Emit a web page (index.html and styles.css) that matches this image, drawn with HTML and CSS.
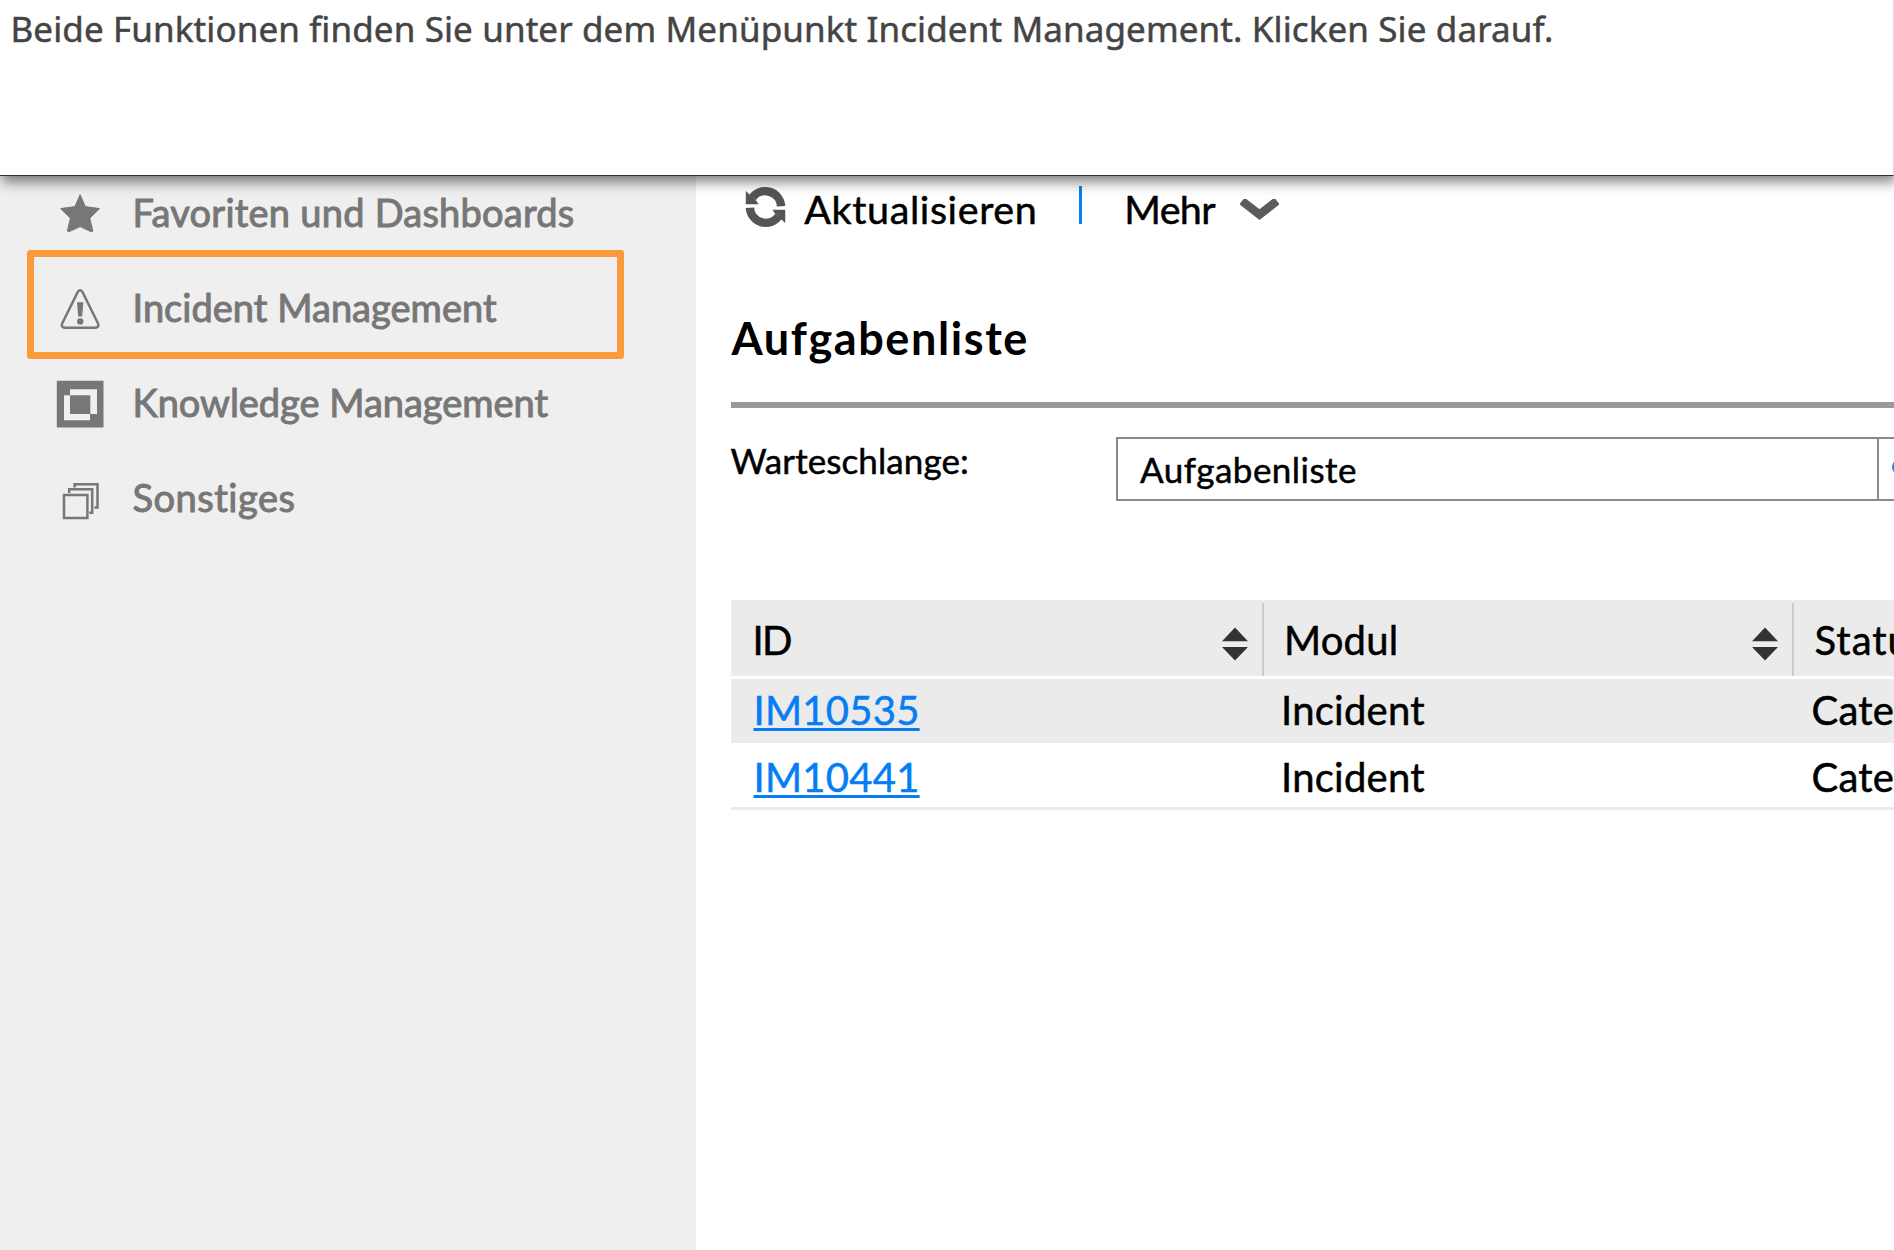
FILE: index.html
```html
<!DOCTYPE html>
<html lang="de">
<head>
<meta charset="utf-8">
<title>Incident Management</title>
<link rel="stylesheet" href="styles.css">
</head>
<body>
<header class="hint">Beide Funktionen finden Sie unter dem Menüpunkt Incident Management. Klicken Sie darauf.</header>
<div class="app">
  <nav class="sidebar">
    <ul class="menu">
      <li class="item">
        <svg class="icon" viewBox="0 0 48 48"><path d="M24.1 4.7 29.3 16.6 43.5 18.6 33.8 28.2 36.8 40.8Q36.5 42.4 34.8 41.6L24.1 36.6 13.4 41.6Q11.7 42.4 11.4 40.8L14.4 28.2 4.7 18.6 18.9 16.6z" fill="#777" stroke="#777"/></svg>
        <span class="t-fav">Favoriten und Dashboards</span>
      </li>
      <li class="item marked">
        <svg class="icon" viewBox="0 0 48 48"><path d="M21.9 6.7Q24.1 3.6 26.3 6.7L42.2 38.8Q43 42.7 39.4 42.7H8.8Q5.2 42.7 6 38.8z" fill="none" stroke="#777" stroke-width="2.5"/><path d="M21 17.3H27.4L26.2 31.4H22.2z" fill="#777"/><circle cx="24.2" cy="36.4" r="3.2" fill="#777"/></svg>
        <span class="t-inc">Incident Management</span>
      </li>
      <li class="item">
        <svg class="icon" viewBox="0 0 48 48"><path d="M.8.8H47.5V47.6H.8z" fill="#777"/><path d="M14 9.3H41V34H34.3V15.3H14zM8 15.3H14V34H34V40.3H8z" fill="#efefef"/></svg>
        <span class="t-know">Knowledge Management</span>
      </li>
      <li class="item">
        <svg class="icon" viewBox="0 0 48 48"><g fill="none" stroke="#777" stroke-width="2.5"><path d="M8 18.9H31.4V41.9H8z"/><path d="M13.2 17V13.2H36.2V36.8H33.2"/><path d="M18.6 11.5V8.2H41.5V31.6H38.4"/></g></svg>
        <span class="t-sonst">Sonstiges</span>
      </li>
    </ul>
  </nav>
  <main class="content">
    <div class="toolbar">
      <svg class="refresh" viewBox="0 0 42 42"><g fill="none" stroke="#555" stroke-width="8.6"><path d="M37 20.2A16.3 16.3 0 0 0 7.6 11.5"/><path d="M5 21.8A16.3 16.3 0 0 0 34.4 30.5"/></g><path d="M.8 4.5V18.2H13.8L12 15z M41.2 37.5V23.8H28.2L30 27z" fill="#555"/></svg>
      <span class="t-akt">Aktualisieren</span>
      <span class="divider"></span>
      <span class="t-mehr">Mehr</span>
      <svg class="chevron" viewBox="0 0 39 22"><path d="M2 2 19.5 15.6 37 2" fill="none" stroke="#5c5c5c" stroke-width="8.5"/></svg>
    </div>
    <h1 class="title">Aufgabenliste</h1>
    <div class="field">
      <label class="label">Warteschlange:</label>
      <div class="combo"><span class="value">Aufgabenliste</span><span class="lookup"><svg class="dot" viewBox="0 0 16 16"><circle cx="8" cy="8" r="6" fill="none" stroke="#2b84e0" stroke-width="4"/></svg></span></div>
    </div>
    <div class="table">
      <div class="row head">
        <div class="cell"><span class="t-id">ID</span><svg class="sort" viewBox="0 0 28 34"><path d="M14 .5 27 14.3H1zM14 33.5 27 20H1z" fill="#333"/></svg></div>
        <div class="cell"><span class="t-modul">Modul</span><svg class="sort" viewBox="0 0 28 34"><path d="M14 .5 27 14.3H1zM14 33.5 27 20H1z" fill="#333"/></svg></div>
        <div class="cell"><span class="t-status">Status</span></div>
      </div>
      <div class="row odd">
        <div class="cell"><a class="link" href="#">IM10535</a></div>
        <div class="cell">Incident</div>
        <div class="cell">Categorize</div>
      </div>
      <div class="row even">
        <div class="cell"><a class="link" href="#">IM10441</a></div>
        <div class="cell">Incident</div>
        <div class="cell">Categorize</div>
      </div>
    </div>
  </main>
</div>
</body>
</html>
```
FILE: styles.css
```css
* { box-sizing: border-box; }
body {
  margin: 0;
  height: 1250px;
  overflow: hidden;
  display: flex;
  flex-direction: column;
  background: #fff;
  color: #000;
  font-family: Lato, "Liberation Sans", sans-serif;
  -webkit-text-stroke: 0.5px currentColor;
  white-space: nowrap;
}
.hint {
  position: relative;
  z-index: 2;
  flex: none;
  height: 176px;
  padding: 5px 0 0 10.5px;
  background: #fff;
  border-right: 1px solid #ddd;
  border-bottom: 1px solid #2d2d2d;
  box-shadow: 2px 6px 12px rgba(0, 0, 0, 0.5);
  color: #444;
  font: 35px/48px "Noto Sans", sans-serif;
  letter-spacing: 0.105px;
}
.app { flex: 1; display: flex; min-height: 0; }

.sidebar { flex: none; width: 695.5px; background: #efefef; color: #777; }
.menu { list-style: none; margin: -11.6px 0 0; padding: 0; }
.item {
  position: relative;
  display: flex;
  align-items: center;
  gap: 28.5px;
  height: 95.2px;
  padding-left: 56px;
  font-size: 38px;
  line-height: 96.6px;
  -webkit-text-stroke-width: 1px;
}
.icon { flex: none; width: 48px; height: 48px; margin-top: 4px; }
.marked::after {
  content: "";
  box-sizing: border-box;
  position: absolute;
  left: 26.5px;
  top: -9.6px;
  width: 597.5px;
  height: 109px;
  border: 7.4px solid #f99b3a;
  border-radius: 3px;
}
.t-fav { letter-spacing: 0.24px; }
.t-inc { letter-spacing: 0.03px; }
.t-know { letter-spacing: -0.027px; }
.t-sonst { letter-spacing: 0.5px; }

.content { flex: 1; min-width: 0; overflow: hidden; padding: 8px 0 0 35px; }
.toolbar {
  display: flex;
  align-items: center;
  height: 48px;
  padding-left: 14.3px;
  font-size: 39.5px;
  line-height: 49px;
}
.refresh { flex: none; width: 41px; height: 42px; margin-top: -3px; }
.t-akt { width: 256px; margin-left: 18.5px; letter-spacing: 0.608px; margin-right: 18.5px; }
.divider { width: 3px; height: 38px; margin-top: -6px; background: #0a80f5; }
.t-mehr { margin-left: 42.5px; width: 115.5px; letter-spacing: -0.7px; }
.chevron { flex: none; width: 39px; height: 22px; margin-top: 3px; }

.title {
  margin: 79px 0 0;
  height: 97px;
  padding-left: 1px;
  border-bottom: 6px solid #999;
  font-size: 45px;
  line-height: 54px;
  font-weight: 700;
  letter-spacing: 1.6px;
  -webkit-text-stroke-width: 0;
}
.field { display: flex; margin-top: 29px; font-size: 35px; }
.label { flex: none; width: 385px; padding-top: 2px; line-height: 42px; letter-spacing: 0.09px; }
.combo { flex: 1; min-width: 0; display: flex; height: 64px; border: 2.6px solid #8a8a8a; border-right: 0; }
.value { flex: none; width: 759.5px; padding: 2px 0 0 22.5px; line-height: 56.5px; letter-spacing: 0.472px; }
.lookup { flex: 1; min-width: 0; display: flex; align-items: center; padding-left: 13px; border-left: 2.6px solid #8a8a8a; overflow: hidden; }
.dot { flex: none; width: 16px; height: 16px; margin-top: -4px; }

.table { margin-top: 99px; border-bottom: 3px solid #ebebeb; font-size: 40px; letter-spacing: 0.26px; }
.row { display: grid; grid-template-columns: 533px 530.5px 1fr; }
.cell { display: flex; min-width: 0; padding-left: 20px; line-height: 62px; }
.cell + .cell { padding-left: 17.5px; }
.head { height: 78.5px; background: #ebebeb; border-bottom: 3px solid #fff; }
.head .cell {
  justify-content: space-between;
  height: 72.5px;
  margin-top: 3px;
  padding-left: 22px;
  padding-right: 13px;
  line-height: 75px;
  border-right: 2.5px solid #ccc;
}
.head .cell:last-child { border-right: 0; }
.head .cell + .cell { padding-left: 20.5px; }
.sort { flex: none; width: 28px; height: 34px; margin-top: 23.5px; }
.t-id { letter-spacing: -1.7px; }
.t-modul { letter-spacing: 0.2px; }
.t-status { letter-spacing: 1px; }
.odd { height: 64px; background: #ebebeb; }
.even { height: 64.5px; padding-top: 3px; }
.link {
  color: #067df5;
  padding-left: 3px;
  text-decoration: underline 3px;
  text-underline-offset: 3px;
  text-decoration-skip-ink: none;
}
```
